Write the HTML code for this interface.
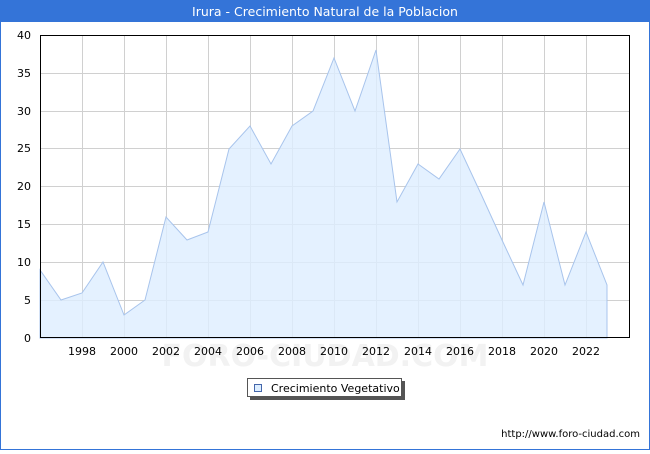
<!DOCTYPE html>
<html><head><meta charset="utf-8"><style>
body{margin:0;width:650px;height:450px;overflow:hidden;background:#fff;font-family:"DejaVu Sans","Liberation Sans",sans-serif}
</style></head><body>
<svg width="650" height="450" xmlns="http://www.w3.org/2000/svg" font-family="DejaVu Sans, Liberation Sans, sans-serif">
<rect x="0.5" y="0.5" width="649" height="449" fill="#fff" stroke="#3474d8"/>
<rect x="0" y="0" width="650" height="22" fill="#3474d8"/>
<text x="325" y="16" fill="#fff" font-size="12.5" text-anchor="middle">Irura - Crecimiento Natural de la Poblacion</text>
<text x="325" y="366" font-size="30" fill="#f2f2f2" text-anchor="middle" font-weight="bold">FORO-CIUDAD.COM</text>
<g stroke="#d0d0d0" stroke-width="1">
<line x1="40" x2="630" y1="300.5" y2="300.5"/><line x1="40" x2="630" y1="262.5" y2="262.5"/><line x1="40" x2="630" y1="224.5" y2="224.5"/><line x1="40" x2="630" y1="186.5" y2="186.5"/><line x1="40" x2="630" y1="148.5" y2="148.5"/><line x1="40" x2="630" y1="111.5" y2="111.5"/><line x1="40" x2="630" y1="73.5" y2="73.5"/>
<line x1="82.5" x2="82.5" y1="35" y2="338"/><line x1="124.5" x2="124.5" y1="35" y2="338"/><line x1="166.5" x2="166.5" y1="35" y2="338"/><line x1="208.5" x2="208.5" y1="35" y2="338"/><line x1="250.5" x2="250.5" y1="35" y2="338"/><line x1="292.5" x2="292.5" y1="35" y2="338"/><line x1="334.5" x2="334.5" y1="35" y2="338"/><line x1="376.5" x2="376.5" y1="35" y2="338"/><line x1="418.5" x2="418.5" y1="35" y2="338"/><line x1="460.5" x2="460.5" y1="35" y2="338"/><line x1="502.5" x2="502.5" y1="35" y2="338"/><line x1="544.5" x2="544.5" y1="35" y2="338"/><line x1="586.5" x2="586.5" y1="35" y2="338"/>
</g>
<polygon fill="#ddeeff" fill-opacity="0.8" stroke="#a8c4ec" stroke-width="1" points="40,338 40,270 61,300 82,293 103,262 124,315 145,300 166,217 187,240 208,232 229,149 250,126 271,164 292,126 313,111 334,58 355,111 376,50 397,202 418,164 439,179 460,149 481,194 502,240 523,285 544,202 565,285 586,232 607,285 607,338"/>
<rect x="40.5" y="35.5" width="589" height="302" fill="none" stroke="#000"/>
<g font-size="11" fill="#000" text-anchor="end">
<text x="31" y="342">0</text><text x="31" y="304">5</text><text x="31" y="266">10</text><text x="31" y="228">15</text><text x="31" y="190">20</text><text x="31" y="152">25</text><text x="31" y="115">30</text><text x="31" y="77">35</text><text x="31" y="39">40</text>
</g>
<g font-size="11" fill="#000" text-anchor="middle">
<text x="82" y="355">1998</text><text x="124" y="355">2000</text><text x="166" y="355">2002</text><text x="208" y="355">2004</text><text x="250" y="355">2006</text><text x="292" y="355">2008</text><text x="334" y="355">2010</text><text x="376" y="355">2012</text><text x="418" y="355">2014</text><text x="460" y="355">2016</text><text x="502" y="355">2018</text><text x="544" y="355">2020</text><text x="586" y="355">2022</text>
</g>
<rect x="250" y="381" width="155" height="19" fill="#555"/>
<rect x="247.5" y="378.5" width="154" height="18" fill="#fff" stroke="#555"/>
<rect x="254.5" y="384.5" width="7" height="7" fill="#ddeeff" stroke="#4466aa"/>
<text x="271" y="392" font-size="11">Crecimiento Vegetativo</text>
<text x="640" y="437" font-size="10" text-anchor="end">http://www.foro-ciudad.com</text>
</svg>
</body></html>
